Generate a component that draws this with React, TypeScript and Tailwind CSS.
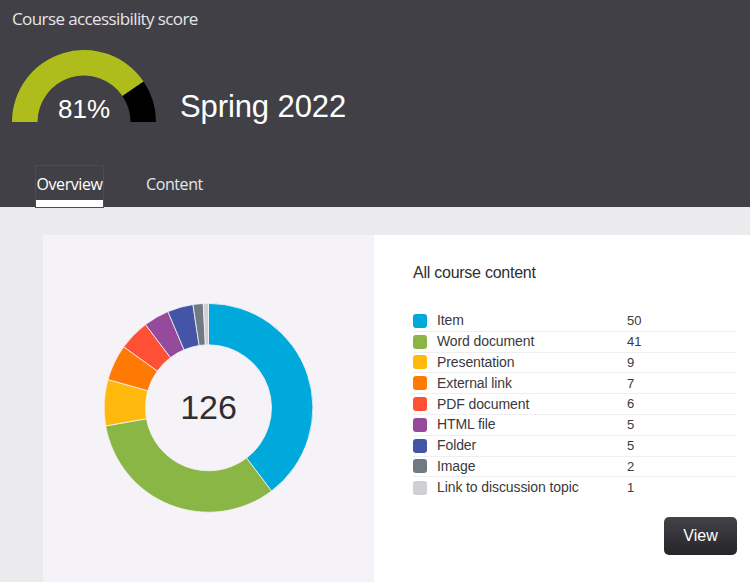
const SEGMENTS = [
  { label: "Item", value: 50, color: "#00a9dc" },
  { label: "Word document", value: 41, color: "#8ab645" },
  { label: "Presentation", value: 9, color: "#ffb90c" },
  { label: "External link", value: 7, color: "#ff7a05" },
  { label: "PDF document", value: 6, color: "#ff5036" },
  { label: "HTML file", value: 5, color: "#964a9c" },
  { label: "Folder", value: 5, color: "#4455a8" },
  { label: "Image", value: 2, color: "#6f7a84" },
  { label: "Link to discussion topic", value: 1, color: "#d0d0d4" },
];

function polar(cx: number, cy: number, r: number, a: number): [number, number] {
  return [cx + r * Math.sin(a), cy - r * Math.cos(a)];
}

function Donut() {
  const total = 126;
  let acc = 0;
  const cx = 104.5;
  const cy = 104.8;
  const R = 104.4;
  const r = 63;
  return (
    <svg width="210" height="210" viewBox="0 0 210 210">
      {SEGMENTS.map((s) => {
        const a0 = (acc / total) * Math.PI * 2;
        acc += s.value;
        const a1 = (acc / total) * Math.PI * 2;
        const large = a1 - a0 > Math.PI ? 1 : 0;
        const [x0, y0] = polar(cx, cy, R, a0);
        const [x1, y1] = polar(cx, cy, R, a1);
        const [x2, y2] = polar(cx, cy, r, a1);
        const [x3, y3] = polar(cx, cy, r, a0);
        const d = `M${x0} ${y0}A${R} ${R} 0 ${large} 1 ${x1} ${y1}L${x2} ${y2}A${r} ${r} 0 ${large} 0 ${x3} ${y3}Z`;
        return <path key={s.label} d={d} fill={s.color} stroke="#f5f3f7" strokeWidth="0.8" />;
      })}
    </svg>
  );
}

function Gauge() {
  return (
    <div className="relative w-[144px] h-[72px]">
      <svg width="144" height="72" viewBox="0 0 144 72" className="block">
        <path d="M0 72A72 72 0 0 1 131.6 31.6L110.5 46A46.5 46.5 0 0 0 25.5 72Z" fill="#afbd1c" />
        <path d="M131.6 31.6A72 72 0 0 1 144 72H118.5A46.5 46.5 0 0 0 110.5 46Z" fill="#000000" />
      </svg>
      <span className="absolute left-0 right-0 bottom-[-3px] text-center text-[26px] leading-[32px] text-white font-['Liberation_Sans',sans-serif]">
        81%
      </span>
    </div>
  );
}

export default function App() {
  return (
    <div className="w-[750px] h-[582px] overflow-hidden bg-[#ebebed] font-['Liberation_Sans',sans-serif]">
      <header className="h-[207px] bg-[#414046] flex flex-col">
        <div className="pl-3 pt-[7px] text-[17px] tracking-[-0.6px] leading-6 text-[#e6e6e8] font-['Open_Sans',sans-serif]">
          Course accessibility score
        </div>
        <div className="pl-3 mt-[19px] flex items-end gap-[24px]">
          <Gauge />
          <div className="text-[31px] tracking-[-0.1px] leading-[36px] text-white mb-[-3px]">Spring 2022</div>
        </div>
        <nav className="mt-[43px] pl-[35px] flex items-start gap-[42px] font-['Open_Sans',sans-serif] text-[16px] tracking-[-0.4px]">
          <div className="relative w-[69px] h-[43px] border border-[#0050ff] text-white text-center leading-[37px]">
            Overview
            <div className="absolute left-0 right-0 bottom-0 h-[7px] bg-white" />
          </div>
          <div className="text-[#e6e6e8] leading-[39px]">Content</div>
        </nav>
      </header>
      <main className="pt-[28px] pl-[43px]">
        <div className="flex h-[347px]">
          <section className="relative w-[331px] bg-[#f5f3f7] flex justify-center pt-[68px]">
            <div className="relative w-[210px] h-[210px]">
              <Donut />
              <div className="absolute inset-0 flex items-center justify-center pb-[2px] text-[34px] text-[#2f2e33]">
                126
              </div>
            </div>
          </section>
          <section className="flex-1 bg-white pl-[39px] pr-[13px] pt-[28px]">
            <h2 className="text-[16px] tracking-[-0.25px] leading-5 text-[#2f2e33]">All course content</h2>
            <ul className="mt-[28px] mr-[1px]">
              {SEGMENTS.map((s, i) => (
                <li
                  key={s.label}
                  className={`flex items-center h-[20.8px] text-[14px] tracking-[-0.1px] text-[#3a393e] ${i < 8 ? "border-b border-[#efeff1]" : ""}`}
                >
                  <span className="w-[14px] h-[14px] rounded-[3px] mr-[10px]" style={{ backgroundColor: s.color }} />
                  <span className="w-[190px]">{s.label}</span>
                  <span className="text-[13px] tracking-normal">{s.value}</span>
                </li>
              ))}
            </ul>
            <div className="flex justify-end mt-[18.4px]">
              <button className="w-[73px] h-[38px] rounded-[5px] bg-gradient-to-b from-[#434247] to-[#262528] text-white text-[16px]">
                View
              </button>
            </div>
          </section>
        </div>
      </main>
    </div>
  );
}
